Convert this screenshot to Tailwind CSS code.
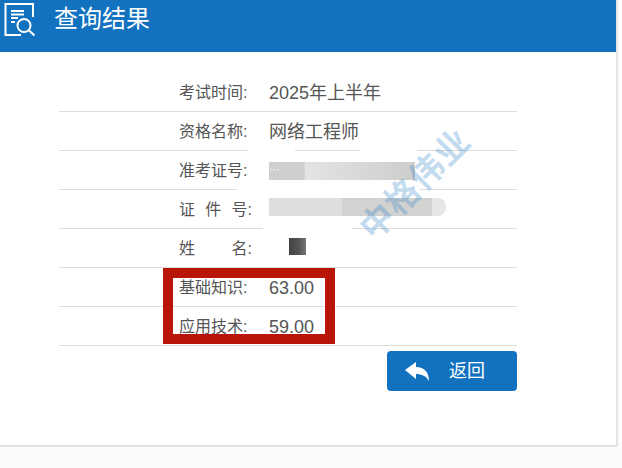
<!DOCTYPE html>
<html lang="zh-CN">
<head>
    <meta charset="UTF-8">
    <title>查询结果</title>
    <script src="https://cdn.jsdelivr.net/npm/@tailwindcss/browser@4"></script>
</head>
<body class="bg-[#fcfcfc] font-['Liberation_Sans','Noto_Sans_CJK_SC',sans-serif] text-[#555]">
<div class="relative w-[622px] h-[468px] overflow-hidden">

    <!-- result panel -->
    <div class="w-[618px] h-[447px] bg-white border-r-2 border-b-2 border-[#e4e4e4]">
        <div class="h-[52px] bg-[#1272bf] flex items-start pl-[4px] pt-[2px] gap-[18px] text-white">
            <svg width="32" height="36" viewBox="0 0 32 36" fill="none" stroke="#fff" stroke-width="2">
                <path d="M29 15V2H1.500v31H17"/>
                <path d="M7 9h13M7 12.500h13M7 16h7M7 20h4"/>
                <circle cx="20" cy="23.500" r="6.500"/>
                <path d="M24.500 28l6 5.500"/>
            </svg>
            <h1 class="text-[24px] leading-none mt-[5px]">查询结果</h1>
        </div>

        <div class="ml-[59px] mt-[21px] w-[458px]">
            <div class="h-[39px] border-b border-[#ddd] flex items-center pl-[120px] pt-[2px]">
                <span class="w-[90px] text-[16px]">考试时间:</span>
                <span class="text-[18px]">2025年上半年</span>
            </div>
            <div class="h-[39px] border-b border-[#ddd] flex items-center pl-[120px] pt-[2px]">
                <span class="w-[90px] text-[16px]">资格名称:</span>
                <span class="text-[18px]">网络工程师</span>
            </div>
            <div class="h-[39px] border-b border-[#ddd] flex items-center pl-[120px] pt-[2px]">
                <span class="w-[90px] text-[16px]">准考证号:</span>
                <span class="w-[146px] h-[18px] bg-[linear-gradient(90deg,#cfcfcf_24%,#e4e4e4_25%,#dcdcdc_50%,#d3d3d3_80%,#cdcdcd)] text-[11px] leading-[14px] text-white">···</span>
            </div>
            <div class="h-[39px] border-b border-[#ddd] flex items-center pl-[120px] pt-[2px]">
                <span class="w-[90px] text-[16px]"><span class="inline-flex w-[73px] justify-between"><span>证</span><span>件</span><span>号:</span></span></span>
                <span class="w-[177px] h-[18px] mb-[6px] rounded-r-lg bg-[linear-gradient(90deg,#dedede_41%,#d2d2d2_41%,#d2d2d2_92%,#e6e6e6_92%)]"></span>
            </div>
            <div class="h-[39px] border-b border-[#ddd] flex items-center pl-[120px] pt-[2px]">
                <span class="w-[90px] text-[16px]"><span class="inline-flex w-[73px] justify-between"><span>姓</span><span>名:</span></span></span>
                <span class="ml-[20px] w-[17px] h-[17px] mb-[5px] bg-[linear-gradient(90deg,#444,#555_60%,#777)]"></span>
            </div>
            <div class="h-[39px] border-b border-[#ddd] flex items-center pl-[120px] pt-[2px]">
                <span class="w-[90px] text-[16px]">基础知识:</span>
                <span class="text-[18px]">63.00</span>
            </div>
            <div class="h-[39px] border-b border-[#ddd] flex items-center pl-[120px] pt-[2px]">
                <span class="w-[90px] text-[16px]">应用技术:</span>
                <span class="text-[18px]">59.00</span>
            </div>

            <div class="flex justify-end mt-[5px]">
                <button class="w-[130px] h-[40px] bg-[#1272bf] rounded-[4px] flex items-center pl-[18px] gap-[19px] text-white text-[18px]">
                    <svg width="25" height="19" viewBox="0 0 25 19" fill="#fff"><path d="M0 8L11 0v5c8 0 13 5 13 14-3-5-7-7-13-7v5z"/></svg>
                    <span>返回</span>
                </button>
            </div>
        </div>
    </div>

    <!-- smudges left by the blur, they cut the row lines -->
    <div class="absolute left-[248px] top-[149px] w-[47px] h-[3px] bg-white"></div>
    <div class="absolute left-[360px] top-[149px] w-[57px] h-[3px] bg-white"></div>
    <div class="absolute left-[237px] top-[188px] w-[183px] h-[3px] bg-white"></div>
    <div class="absolute left-[263px] top-[227px] w-[89px] h-[3px] bg-white"></div>

    <!-- red highlight over the two score rows -->
    <div class="absolute left-[163px] top-[268px] w-[172px] h-[76px] border-[10px] border-[#b81408]"></div>

    <!-- watermark -->
    <div class="absolute left-[345px] top-[167px] -rotate-45 text-[34px] tracking-[1px] leading-none font-bold text-[#1272bf]/25 whitespace-nowrap">中格伟业</div>

</div>
</body>
</html>
